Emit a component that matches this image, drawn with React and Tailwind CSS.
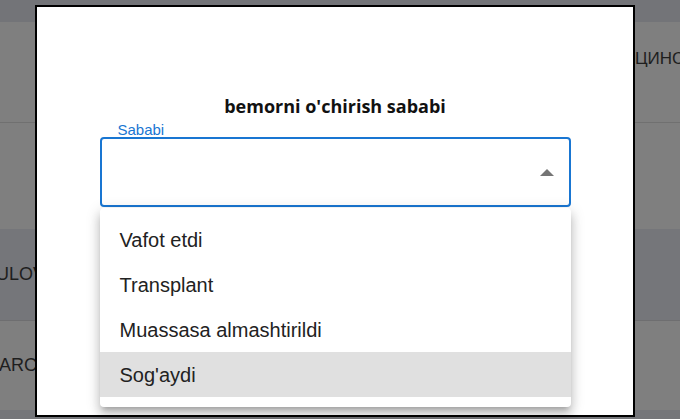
import React from "react";

const reasons = ["Vafot etdi", "Transplant", "Muassasa almashtirildi", "Sog'aydi"];

function BgRow({ className, left, right, leftShift = 0, rightTop }) {
  return (
    <div className={`flex justify-between ${className}`}>
      <div className="w-[35px] overflow-hidden flex items-center">
        {left && (
          <span className="whitespace-nowrap text-[18px] text-[#1e1e1e]" style={{ marginLeft: leftShift }}>
            {left}
          </span>
        )}
      </div>
      <div className="w-[45px] overflow-hidden">
        {right && (
          <span className={`block whitespace-nowrap text-[17px] text-[#1e1e1e] ${rightTop}`}>{right}</span>
        )}
      </div>
    </div>
  );
}

export default function App() {
  return (
    <div className="relative w-[680px] h-[419px] overflow-hidden bg-[#7f7f7f] font-['Liberation_Sans',Arial,sans-serif]">
      {/* dimmed page behind the modal */}
      <div className="flex flex-col">
        <BgRow className="h-[22px] bg-[#737478]" />
        <BgRow className="h-[101px] border-b border-[#707070]" right="ЦИНСКИЙ" rightTop="pt-[24px]" />
        <BgRow className="h-[106px]" />
        <BgRow className="h-[92px] bg-[#75767a] border-b border-[#6e6e70]" left="ULOV" leftShift={-4} />
        <BgRow className="h-[89px]" left="ARCH" leftShift={-1} />
        <BgRow className="h-[9px] bg-[#75767a]" />
      </div>

      {/* modal */}
      <div className="absolute left-[35px] top-[5px] w-[600px] h-[412px] bg-white border-2 border-black flex flex-col items-center pt-[87px]">
        <h2 className="font-['Open_Sans',sans-serif] font-bold text-[18px] leading-[24px] text-[#111]">
          bemorni o'chirish sababi
        </h2>

        <div className="relative w-[471px] mt-[4px]">
          <div className="pl-[18px] text-[15px] leading-[15px] text-[#1976d2]">Sababi</div>
          <div className="h-[70px] border-2 border-[#1976d2] rounded-[4px] flex items-center justify-end pr-[15px]">
            <svg width="14" height="7" viewBox="0 0 14 7">
              <path d="M0 7 L7 0 L14 7 Z" fill="#757575" />
            </svg>
          </div>

          {/* opened dropdown */}
          <div className="absolute left-0 top-[86px] w-[471px] bg-white rounded-[4px] pt-[9px] pb-[10px] shadow-[0_5px_5px_-3px_rgba(0,0,0,0.2),0_8px_10px_1px_rgba(0,0,0,0.14),0_3px_14px_2px_rgba(0,0,0,0.12)]">
            {reasons.map((r, i) => (
              <div
                key={r}
                className={`h-[45px] flex items-center pl-[20px] text-[20px] text-[#222] ${i === 3 ? "bg-[#e0e0e0]" : ""}`}
              >
                {r}
              </div>
            ))}
          </div>
        </div>
      </div>
    </div>
  );
}
